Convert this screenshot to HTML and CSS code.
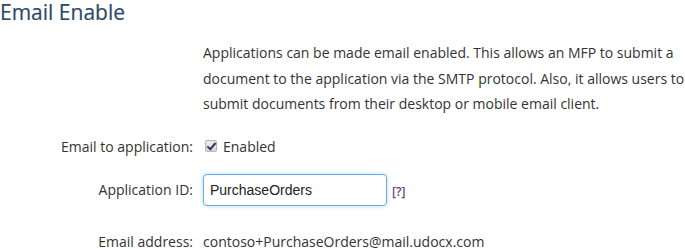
FILE: index.html
```html
<!DOCTYPE html>
<html lang="en">
<head>
  <meta charset="UTF-8" />
  <title>Email Enable</title>
  <link rel="stylesheet" href="styles.css">
</head>
<body>

<section class="panel">
  <h2 class="panel-title">Email Enable</h2>

  <div class="form-row intro-row">
    <div class="form-label"></div>
    <p class="intro">Applications can be made email enabled. This allows an MFP to submit a document to the application via the SMTP protocol. Also, it allows users to submit documents from their desktop or mobile email client.</p>
  </div>

  <div class="form-row check-row">
    <label class="form-label" for="email-enabled">Email to application:</label>
    <label class="check-label"><input type="checkbox" id="email-enabled" class="check" checked /> Enabled</label>
  </div>

  <div class="form-row id-row">
    <label class="form-label" for="app-id">Application ID:</label>
    <div class="field">
      <input type="text" id="app-id" class="text-input" value="PurchaseOrders" />
      <a href="#" class="help-link">[?]</a>
    </div>
  </div>

  <div class="form-row address-row">
    <div class="form-label">Email address:</div>
    <div class="value">contoso+PurchaseOrders@mail.udocx.com</div>
  </div>
</section>

</body>
</html>
```

FILE: styles.css
```css
body {
  margin: 0;
  font-family: "Open Sans", "Noto Sans", sans-serif;
  font-size: 14px;
  color: #333;
  background: #fff;
}
.panel {
  width: 685px;
}
.panel-title {
  margin: 0;
  font-size: 21px;
  font-weight: 400;
  line-height: 25px;
  color: #2b4a6b;
  -webkit-text-stroke: 0.2px #2b4a6b;
}
.form-row {
  display: grid;
  grid-template-columns: 193px 1fr;
  column-gap: 10px;
  align-items: center;
}
.form-label {
  text-align: right;
  white-space: nowrap;
}
.intro-row {
  margin-top: 15px;
}
.intro {
  margin: 0;
  line-height: 25.5px;
}
.check-row {
  margin-top: 20px;
}
.check-label {
  display: flex;
  align-items: center;
  gap: 6px;
}
.check {
  appearance: none;
  -webkit-appearance: none;
  margin: 0 0 0 2px;
  width: 12px;
  height: 12px;
  border: 1px solid #b5b5b5;
  border-radius: 2px;
  background: linear-gradient(#ececec, #d9d9d9);
  position: relative;
}
.check:checked::after {
  content: "";
  position: absolute;
  left: 3px;
  top: 0;
  width: 3px;
  height: 7px;
  border: solid #2d3c5e;
  border-width: 0 2px 2px 0;
  transform: rotate(40deg);
}
.field {
  display: flex;
  align-items: flex-end;
  gap: 5px;
}
.text-input {
  width: 184px;
  height: 32px;
  box-sizing: border-box;
  padding: 4px 6px;
  font-family: "Liberation Sans", Arial, sans-serif;
  font-size: 14px;
  color: #222;
  border: 1px solid #66afe9;
  border-radius: 4px;
  box-shadow: 0 0 4px rgba(102, 175, 233, 0.5);
  outline: none;
}
.help-link {
  font-size: 12px;
  font-weight: 600;
  color: #6a3c7c;
  text-decoration: none;
  margin-bottom: 6px;
}
.id-row {
  margin-top: 18px;
}
.address-row {
  margin-top: 26px;
}
```
